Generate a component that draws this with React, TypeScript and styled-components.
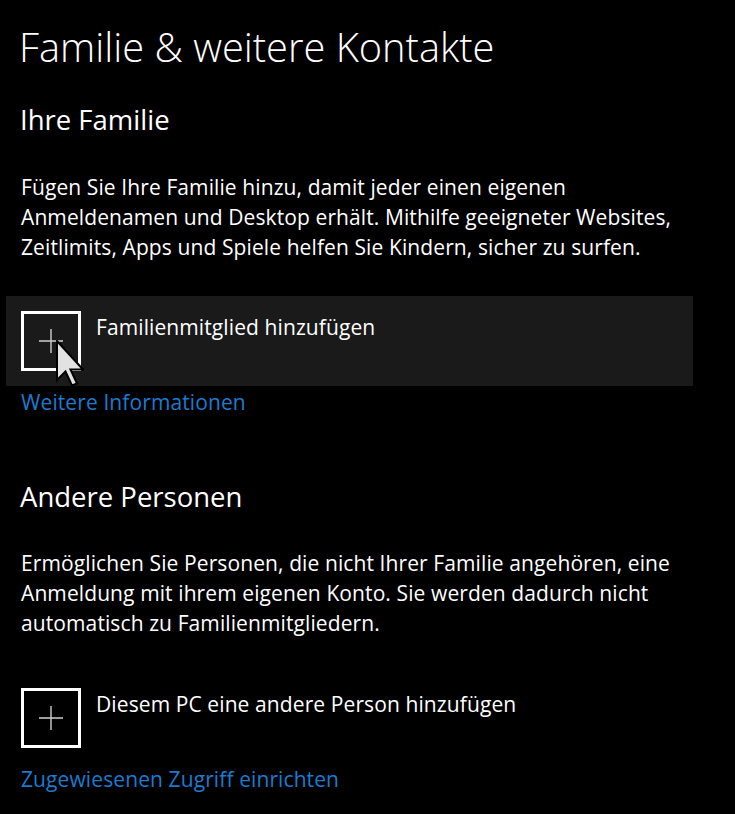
import React from 'react';
import styled, { createGlobalStyle } from 'styled-components';

const GlobalStyle = createGlobalStyle`
  html, body {
    margin: 0;
    padding: 0;
    background: #000;
  }
  body {
    font-family: "Open Sans", "Liberation Sans", sans-serif;
    color: #fff;
  }
`;

const Page = styled.div`
  width: 735px;
  height: 814px;
  padding: 0 20px;
  box-sizing: border-box;
  background: #000;
  overflow: hidden;
`;

const Title = styled.h1`
  margin: 19px 0 0 -1px;
  font-size: 39.8px;
  font-weight: 300;
  line-height: 56px;
  white-space: nowrap;
`;

const SectionHeading = styled.h2<{ $top: number }>`
  margin: ${p => p.$top}px 0 0 0;
  font-size: 27.5px;
  font-weight: 400;
  line-height: 36px;
`;

const Paragraph = styled.p<{ $top: number }>`
  margin: ${p => p.$top}px 0 0 1px;
  font-size: 21px;
  letter-spacing: 0.1px;
  line-height: 30px;
  white-space: nowrap;
`;

const ActionRow = styled.div<{ $top: number; $hover?: boolean }>`
  position: relative;
  display: flex;
  align-items: flex-start;
  gap: 15px;
  margin: ${p => p.$top}px 0 0 -14px;
  padding-left: 15px;
  width: 687px;
  height: 90px;
  box-sizing: border-box;
  background: ${p => (p.$hover ? '#1a1a1a' : 'transparent')};
`;

const PlusBox = styled.div`
  flex: none;
  margin-top: 15px;
  width: 60px;
  height: 60px;
  box-sizing: border-box;
  border: 3px solid #fff;
  display: flex;
  align-items: center;
  justify-content: center;
`;

const RowLabel = styled.span`
  margin-top: 17px;
  font-size: 21px;
  letter-spacing: 0.1px;
  line-height: 28px;
  white-space: nowrap;
`;

const Link = styled.a`
  display: block;
  margin-left: 1px;
  font-size: 21px;
  letter-spacing: 0.1px;
  line-height: 32px;
  color: #1b7bd0;
  text-decoration: none;
`;

// mouse pointer hovering over the first add button
const Cursor = styled.svg`
  position: absolute;
  left: 44px;
  top: 44px;
  pointer-events: none;
`;

function PlusIcon() {
  return (
    <svg width="24" height="24" viewBox="0 0 24 24">
      <path d="M12 0V24M0 12H24" stroke="#cfcfcf" strokeWidth="1.4" fill="none" />
    </svg>
  );
}

function ArrowCursor() {
  return (
    <Cursor width="34" height="50" viewBox="0 0 34 50">
      <path
        d="M7 1 L7 40 L15.5 31.5 L22 45.5 L27 43.5 L20.5 29.5 L33 29.5 Z"
        fill="#e2e2e2"
        stroke="#000"
        strokeWidth="2"
        strokeLinejoin="miter"
      />
    </Cursor>
  );
}

export default function App() {
  return (
    <Page>
      <GlobalStyle />
      <Title>Familie &amp; weitere Kontakte</Title>

      <SectionHeading $top={27}>Ihre Familie</SectionHeading>
      <Paragraph $top={34}>
        Fügen Sie Ihre Familie hinzu, damit jeder einen eigenen
        <br />
        Anmeldenamen und Desktop erhält. Mithilfe geeigneter Websites,
        <br />
        Zeitlimits, Apps und Spiele helfen Sie Kindern, sicher zu surfen.
      </Paragraph>

      <ActionRow $top={34} $hover>
        <PlusBox>
          <PlusIcon />
        </PlusBox>
        <RowLabel>Familienmitglied hinzufügen</RowLabel>
        <ArrowCursor />
      </ActionRow>
      <Link href="#">Weitere Informationen</Link>

      <SectionHeading $top={61}>Andere Personen</SectionHeading>
      <Paragraph $top={33}>
        Ermöglichen Sie Personen, die nicht Ihrer Familie angehören, eine
        <br />
        Anmeldung mit ihrem eigenen Konto. Sie werden dadurch nicht
        <br />
        automatisch zu Familienmitgliedern.
      </Paragraph>

      <ActionRow $top={35}>
        <PlusBox>
          <PlusIcon />
        </PlusBox>
        <RowLabel>Diesem PC eine andere Person hinzufügen</RowLabel>
      </ActionRow>
      <Link href="#">Zugewiesenen Zugriff einrichten</Link>
    </Page>
  );
}
